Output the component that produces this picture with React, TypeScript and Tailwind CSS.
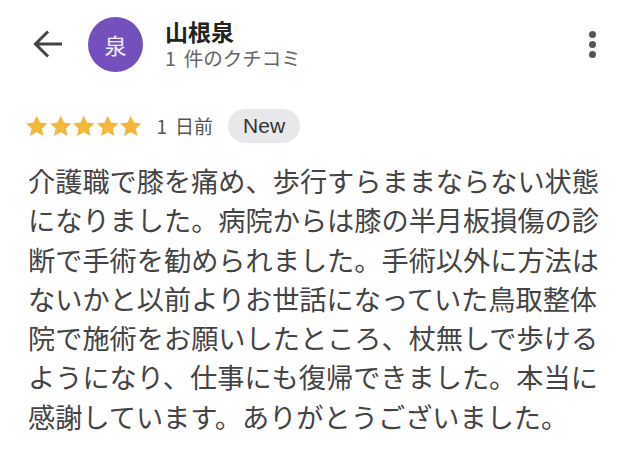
const reviewText =
  "介護職で膝を痛め、歩行すらままならない状態になりました。病院からは膝の半月板損傷の診断で手術を勧められました。手術以外に方法はないかと以前よりお世話になっていた鳥取整体院で施術をお願いしたところ、杖無しで歩けるようになり、仕事にも復帰できました。本当に感謝しています。ありがとうございました。";

function Star() {
  return (
    <svg width="23.5" height="23" viewBox="0 0 24 24" className="shrink-0">
      <path
        fill="#f2b73d"
        d="M12 .8l3.4 7.1 7.8.9-5.8 5.3 1.6 7.7L12 17.9l-7 3.9 1.6-7.7L.8 8.8l7.8-.9z"
      />
    </svg>
  );
}

export default function App() {
  return (
    <div
      className="w-[640px] h-[452px] bg-white overflow-hidden text-[#3d3d3d]"
      style={{ fontFamily: '"Noto Sans CJK JP", "Noto Sans", sans-serif' }}
    >
      {/* header */}
      <div className="flex items-center h-[56px] mt-[16px] pl-[32px] pr-[44px]">
        <svg width="30" height="28" viewBox="0 0 30 28" className="shrink-0">
          <path
            d="M29 14H4M15 2.5L3.5 14 15 25.5"
            fill="none"
            stroke="#444"
            strokeWidth="3"
            strokeLinecap="square"
          />
        </svg>
        <div className="ml-[26px] w-[55px] h-[55px] rounded-full bg-[#7450bd] flex items-center justify-center text-white/90 text-[22px] shrink-0">
          泉
        </div>
        <div className="ml-[22px] flex-1 flex flex-col">
          <span className="text-[23px] font-bold leading-[27px] text-[#222]">山根泉</span>
          <span className="text-[19.5px] leading-[25px] text-[#666] flex">
            <span>1</span>
            <span className="ml-[8px]">件のクチコミ</span>
          </span>
        </div>
        <div className="flex flex-col gap-[3px]">
          <span className="w-[7px] h-[7px] rounded-full bg-[#555]" />
          <span className="w-[7px] h-[7px] rounded-full bg-[#555]" />
          <span className="w-[7px] h-[7px] rounded-full bg-[#555]" />
        </div>
      </div>

      {/* rating row */}
      <div className="flex items-center mt-[37px] pl-[25px]">
        <div className="flex">
          <Star />
          <Star />
          <Star />
          <Star />
          <Star />
        </div>
        <span className="ml-[14px] text-[19px] text-[#555] flex">
          <span>1</span>
          <span className="ml-[8px]">日前</span>
        </span>
        <span
          className="ml-[15px] h-[34px] px-[15px] rounded-full bg-[#e8e8ea] flex items-center text-[21px] text-[#333]"
          style={{ fontFamily: '"Liberation Sans", Arial, sans-serif' }}
        >
          New
        </span>
      </div>

      {/* body */}
      <p className="mt-[18px] ml-[28px] w-[580px] text-[27.2px] leading-[39.3px] text-[#444]">
        {reviewText}
      </p>
    </div>
  );
}
